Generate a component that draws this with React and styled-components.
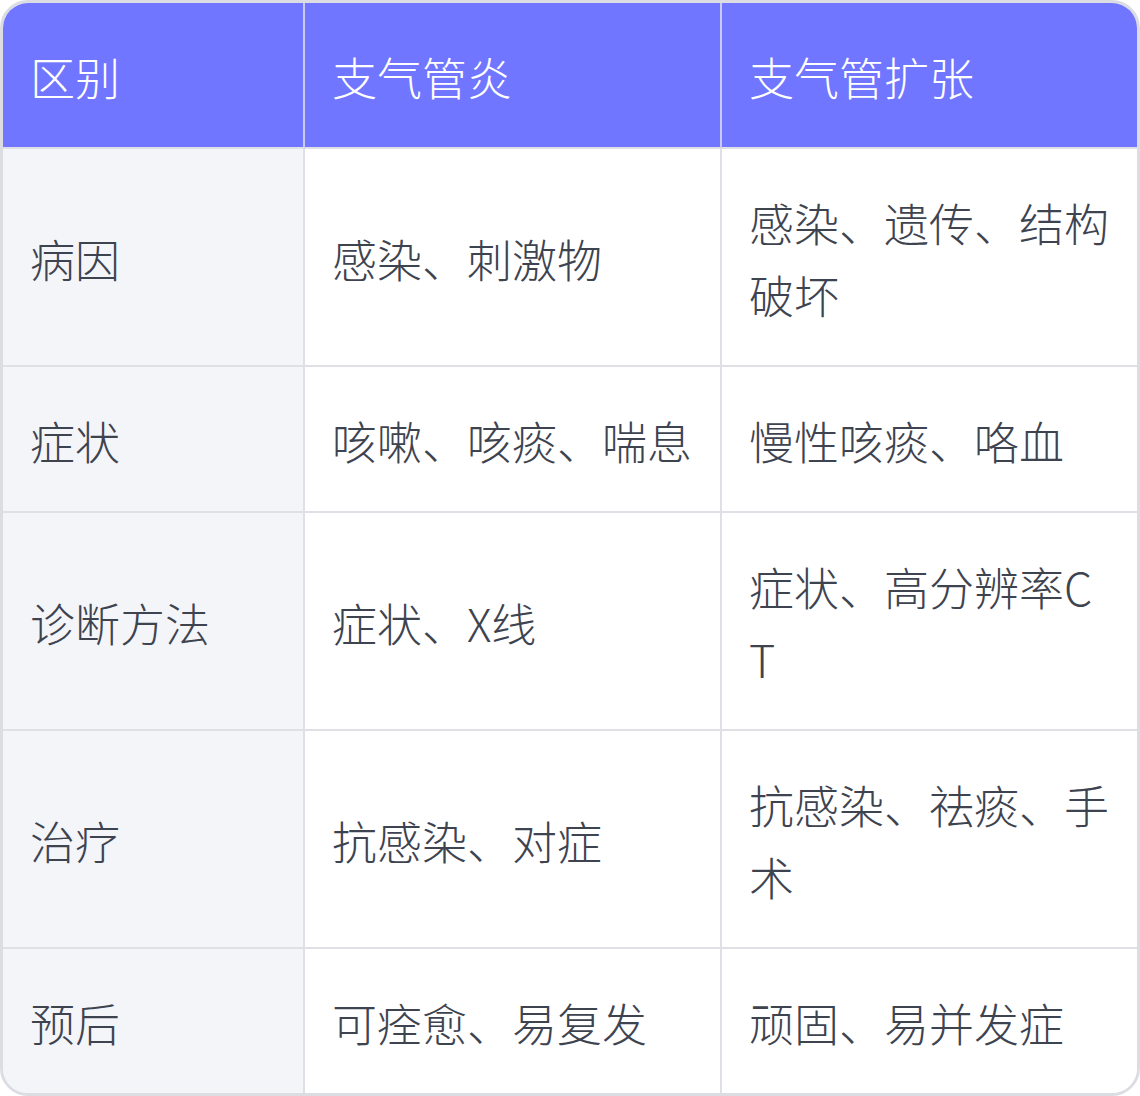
import React from "react";
import styled, { createGlobalStyle } from "styled-components";

const GlobalStyle = createGlobalStyle`
  html, body {
    margin: 0;
    padding: 0;
    background: #ffffff;
  }
`;

// Moldura externa com cantos arredondados
const Frame = styled.div`
  width: 1140px;
  height: 1096px;
  box-sizing: border-box;
  border: 3px solid #dcdde2;
  border-radius: 28px;
  overflow: hidden;
  background: #ffffff;
`;

const Table = styled.table`
  width: 100%;
  border-collapse: separate;
  border-spacing: 0;
  table-layout: fixed;
  font-family: "Noto Sans CJK SC", "Noto Sans", sans-serif;
  font-weight: 300;
  font-size: 45px;
  line-height: 72px;
`;

const HeadCell = styled.th`
  background: #7076ff;
  color: #ffffff;
  font-weight: 300;
  text-align: left;
  padding: 38px 27px 34px;
  border-right: ${(p) => (p.$last ? "none" : "2px solid #c9cbf3")};
  border-bottom: 2px solid #dfe0e5;
`;

const Cell = styled.td`
  background: ${(p) => (p.$label ? "#f4f5f9" : "#ffffff")};
  color: #3e4350;
  padding: 38px 27px 34px;
  vertical-align: middle;
  word-break: break-all;
  border-right: ${(p) => (p.$last ? "none" : "2px solid #dfe0e5")};
  border-bottom: ${(p) => (p.$bottom ? "none" : "2px solid #dfe0e5")};
`;

const head = ["区别", "支气管炎", "支气管扩张"];

const rows = [
  ["病因", "感染、刺激物", "感染、遗传、结构破坏"],
  ["症状", "咳嗽、咳痰、喘息", "慢性咳痰、咯血"],
  ["诊断方法", "症状、X线", "症状、高分辨率CT"],
  ["治疗", "抗感染、对症", "抗感染、祛痰、手术"],
  ["预后", "可痊愈、易复发", "顽固、易并发症"],
];

function App() {
  return (
    <>
      <GlobalStyle />
      <Frame>
        <Table>
          <colgroup>
            <col style={{ width: 302 }} />
            <col style={{ width: 417 }} />
            <col />
          </colgroup>
          <thead>
            <tr>
              {head.map((h, i) => (
                <HeadCell key={h} $last={i === head.length - 1}>
                  {h}
                </HeadCell>
              ))}
            </tr>
          </thead>
          <tbody>
            {rows.map((r, ri) => (
              <tr key={r[0]}>
                {r.map((c, ci) => (
                  <Cell
                    key={ci}
                    $label={ci === 0}
                    $last={ci === r.length - 1}
                    $bottom={ri === rows.length - 1}
                  >
                    {c}
                  </Cell>
                ))}
              </tr>
            ))}
          </tbody>
        </Table>
      </Frame>
    </>
  );
}

export default App;
